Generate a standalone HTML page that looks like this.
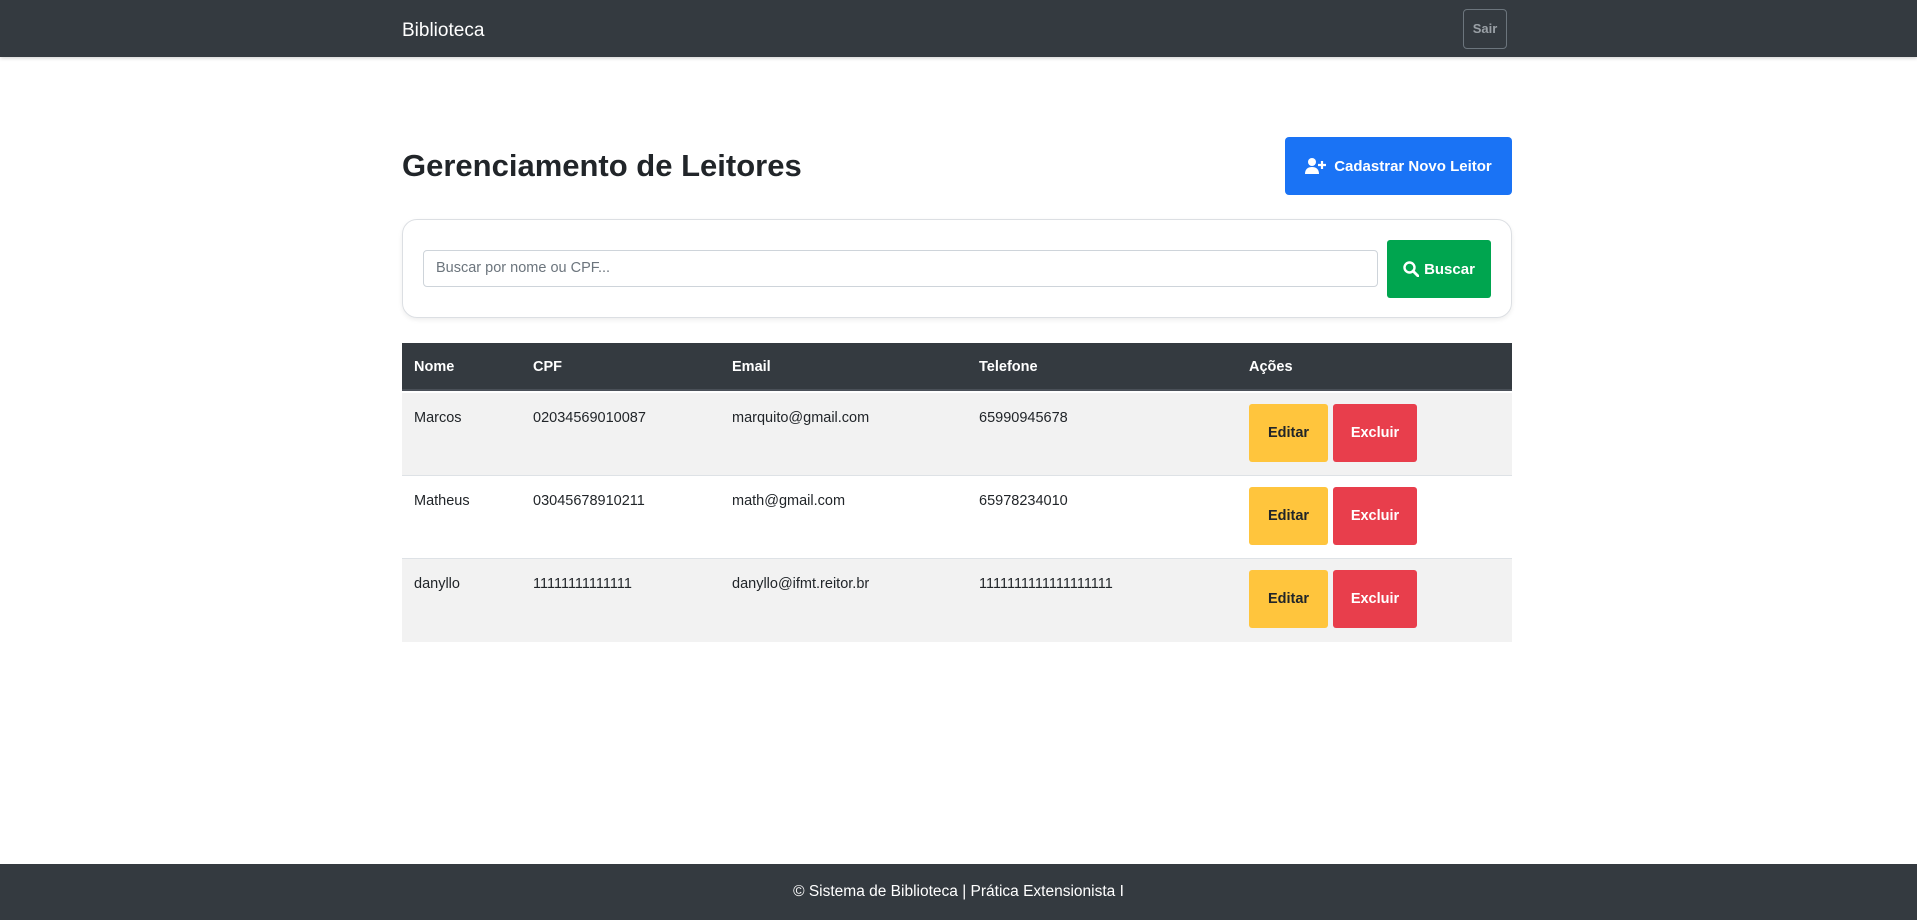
<!DOCTYPE html>
<html><head><meta charset="utf-8"><style>
*{box-sizing:border-box;margin:0;padding:0}
body{width:1917px;height:920px;position:relative;font-family:"Liberation Sans",sans-serif;color:#212529;background:#fff;overflow:hidden;font-size:15px}
.a{position:absolute}
.nav{left:0;top:0;width:1917px;height:57px;background:#343a40;box-shadow:0 1px 4px rgba(0,0,0,.2)}
.brand{left:402px;top:20px;color:#fff;font-size:19px}
.sair{left:1463px;top:9px;width:44px;height:40px;border:1px solid #6c757d;border-radius:4px;color:#9aa0a6;font-weight:bold;font-size:13px;text-align:center;line-height:38px}
h2{position:absolute;left:402px;top:148px;font-size:31px;font-weight:bold}
.btnb{left:1285px;top:137px;width:227px;height:58px;background:#1a73f5;border-radius:4px;color:#fff;font-weight:bold;font-size:15px;display:flex;align-items:center;justify-content:center;gap:7px}
.card{left:402px;top:219px;width:1110px;height:99px;border:1px solid #dcdfe3;border-radius:15px;box-shadow:0 2px 5px rgba(0,0,0,.07)}
.inp{left:423px;top:250px;width:955px;height:37px;border:1px solid #ced4da;border-radius:4px;color:#6c757d;font-size:14.5px;padding:9px 12px}
.bus{left:1387px;top:240px;width:104px;height:58px;background:#00a54f;border-radius:3px;color:#fff;font-weight:bold;font-size:15px;display:flex;align-items:center;justify-content:center;gap:5px}
.th{left:402px;top:343px;width:1110px;height:48px;background:#343a40;border-bottom:2px solid #4a5058}
.th span{position:absolute;top:16px;color:#fff;font-weight:bold;font-size:14.5px}
.row{left:402px;width:1110px;height:83px;border-bottom:1px solid #dee2e6}
.row span{position:absolute;top:17px;font-size:14.5px}
.ed,.ex{position:absolute;top:11px;height:58px;border-radius:3px;font-weight:bold;font-size:14.5px;text-align:center;line-height:58px}
.ed{left:847px;width:79px;background:#ffc53d;color:#212529}
.ex{left:931px;width:84px;background:#e83e4c;color:#fff}
.foot{left:0;top:864px;width:1917px;height:56px;background:#343a40;color:#fff;text-align:center;line-height:56px;font-size:15.5px}
</style></head><body>
<div class="a nav"></div>
<div class="a brand">Biblioteca</div>
<div class="a sair">Sair</div>
<h2>Gerenciamento de Leitores</h2>
<div class="a btnb"><svg width="22" height="16" viewBox="0 0 22 16"><circle cx="7" cy="4" r="4" fill="#fff"/><path d="M0 16c0-5 3-7 7-7s7 2 7 7z" fill="#fff"/><path d="M17 3v8M13 7h8" stroke="#fff" stroke-width="2.2"/></svg>Cadastrar Novo Leitor</div>
<div class="a card"></div>
<div class="a inp">Buscar por nome ou CPF...</div>
<div class="a bus"><svg width="16" height="16" viewBox="0 0 16 16"><circle cx="6.5" cy="6.5" r="5" fill="none" stroke="#fff" stroke-width="2.4"/><path d="M10 10l5 5" stroke="#fff" stroke-width="2.8" stroke-linecap="round"/></svg>Buscar</div>
<div class="a th"><span style="left:12px">Nome</span><span style="left:131px">CPF</span><span style="left:330px">Email</span><span style="left:577px">Telefone</span><span style="left:847px">Ações</span></div>
<div class="a row" style="top:393px;background:#f2f2f2"><span style="left:12px">Marcos</span><span style="left:131px">02034569010087</span><span style="left:330px">marquito@gmail.com</span><span style="left:577px">65990945678</span><div class="ed">Editar</div><div class="ex">Excluir</div></div>
<div class="a row" style="top:476px;background:#fff"><span style="left:12px">Matheus</span><span style="left:131px">03045678910211</span><span style="left:330px">math@gmail.com</span><span style="left:577px">65978234010</span><div class="ed">Editar</div><div class="ex">Excluir</div></div>
<div class="a row" style="top:559px;background:#f2f2f2;border-bottom:none"><span style="left:12px">danyllo</span><span style="left:131px">11111111111111</span><span style="left:330px">danyllo@ifmt.reitor.br</span><span style="left:577px">1111111111111111111</span><div class="ed">Editar</div><div class="ex">Excluir</div></div>
<div class="a foot">© Sistema de Biblioteca | Prática Extensionista I</div>
</body></html>
